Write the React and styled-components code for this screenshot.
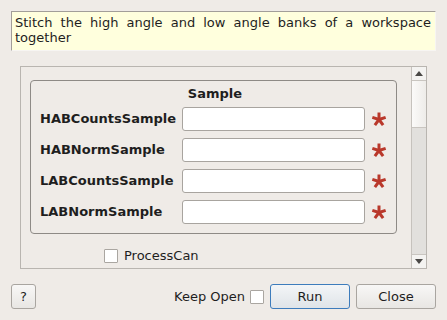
import React from "react";
import styled, { createGlobalStyle } from "styled-components";

const Global = createGlobalStyle`
  html, body { margin: 0; padding: 0; background: #efebe7; }
  body { font-family: "DejaVu Sans", "Liberation Sans", sans-serif; font-size: 13px; color: #1e1e1e; }
  * { box-sizing: border-box; }
`;

const Dialog = styled.div`
  width: 447px;
  height: 320px;
  padding: 11px 11px 0 11px;
  display: flex;
  flex-direction: column;
  background: #efebe7;
  overflow: hidden;
`;

const Description = styled.div`
  height: 40px;
  background: #ffffdd;
  border-top: 1px solid #a29e99;
  border-left: 1px solid #a29e99;
  border-right: 1px solid #f7f5f2;
  border-bottom: 1px solid #f7f5f2;
  padding: 3px 4px 0 3px;
  line-height: 15px;
  text-align: justify;
  text-align-last: left;
`;

const ScrollArea = styled.div`
  margin: 15px 9px 0 9px;
  height: 203px;
  border: 1px solid #b9b5b0;
  display: flex;
  overflow: hidden;
`;

const Content = styled.div`
  flex: 1;
  padding: 13px 0 0 9px;
  display: flex;
  flex-direction: column;
`;

const Group = styled.div`
  width: 367px;
  border: 1px solid #8e8a86;
  border-radius: 4px;
  padding: 5px 9px 9px 9px;
  display: flex;
  flex-direction: column;
`;

const GroupTitle = styled.div`
  font-weight: bold;
  text-align: center;
  line-height: 16px;
  height: 16px;
  padding-left: 3px;
  margin-bottom: 5px;
`;

const Rows = styled.div`
  display: grid;
  grid-template-columns: 142px 183px 1fr;
  row-gap: 7px;
  align-items: center;
`;

const Label = styled.div`
  font-weight: bold;
  white-space: nowrap;
  line-height: 16px;
`;

const Input = styled.div`
  height: 24px;
  background: #ffffff;
  border: 1px solid #a8a49f;
  border-radius: 3px;
`;

const Star = styled.div`
  display: flex;
  align-items: center;
  padding-left: 6px;
  height: 24px;
`;

const CheckRow = styled.div`
  display: flex;
  align-items: center;
  gap: 6px;
  margin-top: 14px;
  padding-left: 74px;
  line-height: 16px;
`;

const Box = styled.div`
  width: 14px;
  height: 14px;
  background: #ffffff;
  border: 1px solid #aaa6a1;
  border-radius: 1px;
  flex: none;
`;

const ScrollBar = styled.div`
  width: 15px;
  border-left: 1px solid #c6c2bd;
  display: flex;
  flex-direction: column;
  background: #e2e0dd;
`;

const Arrow = styled.div`
  height: 14px;
  background: #f4f3f1;
  display: flex;
  align-items: center;
  justify-content: center;
  border-bottom: ${(p) => (p.$top ? "1px solid #c9c5c0" : "none")};
  border-top: ${(p) => (p.$top ? "none" : "1px solid #c9c5c0")};
  flex: none;
`;

const Handle = styled.div`
  height: 47px;
  background: linear-gradient(to right, #fbfaf9, #eeece9);
  border-bottom: 1px solid #c9c5c0;
  flex: none;
`;

const Track = styled.div`
  flex: 1;
  background: #e2e0dd;
`;

const Footer = styled.div`
  margin-top: 15px;
  display: flex;
  align-items: center;
  height: 25px;
`;

const Button = styled.button`
  font-family: inherit;
  font-size: 13px;
  color: #1e1e1e;
  height: 25px;
  width: ${(p) => p.$w}px;
  padding: 0;
  border: 1px solid ${(p) => (p.$primary ? "#3d7cbc" : "#a9a5a0")};
  border-radius: 3px;
  background: ${(p) =>
    p.$primary
      ? "linear-gradient(#f3f5f7, #dfe4e8)"
      : "linear-gradient(#f8f7f6, #e8e6e3)"};
  flex: none;
`;

const Spacer = styled.div`
  flex: 1;
`;

const KeepLabel = styled.span`
  margin-right: 5px;
`;

const Gap = styled.div`
  width: ${(p) => p.$w}px;
  flex: none;
`;

const Asterisk = () => (
  <svg width="16" height="16" viewBox="0 0 16 16">
    {[-90, -18, 54, 126, 198].map((a) => {
      const r = (a * Math.PI) / 180;
      return (
        <line
          key={a}
          x1="8"
          y1="8.5"
          x2={8 + 7 * Math.cos(r)}
          y2={8.5 + 7 * Math.sin(r)}
          stroke="#b9382b"
          strokeWidth="3"
        />
      );
    })}
  </svg>
);

const Tri = ({ up }) => (
  <svg width="8" height="5" viewBox="0 0 8 5">
    <polygon points={up ? "0,5 8,5 4,0" : "0,0 8,0 4,5"} fill="#4a4846" />
  </svg>
);

const fields = ["HABCountsSample", "HABNormSample", "LABCountsSample", "LABNormSample"];

export default function App() {
  return (
    <>
      <Global />
      <Dialog>
        <Description>
          Stitch the high angle and low angle banks of a workspace together
        </Description>
        <ScrollArea>
          <Content>
            <Group>
              <GroupTitle>Sample</GroupTitle>
              <Rows>
                {fields.map((f) => (
                  <React.Fragment key={f}>
                    <Label>{f}</Label>
                    <Input />
                    <Star>
                      <Asterisk />
                    </Star>
                  </React.Fragment>
                ))}
              </Rows>
            </Group>
            <CheckRow>
              <Box />
              <span>ProcessCan</span>
            </CheckRow>
          </Content>
          <ScrollBar>
            <Arrow $top>
              <Tri up />
            </Arrow>
            <Handle />
            <Track />
            <Arrow>
              <Tri />
            </Arrow>
          </ScrollBar>
        </ScrollArea>
        <Footer>
          <Button $w={25}>?</Button>
          <Spacer />
          <KeepLabel>Keep Open</KeepLabel>
          <Box />
          <Gap $w={6} />
          <Button $w={80} $primary>Run</Button>
          <Gap $w={6} />
          <Button $w={80}>Close</Button>
        </Footer>
      </Dialog>
    </>
  );
}
